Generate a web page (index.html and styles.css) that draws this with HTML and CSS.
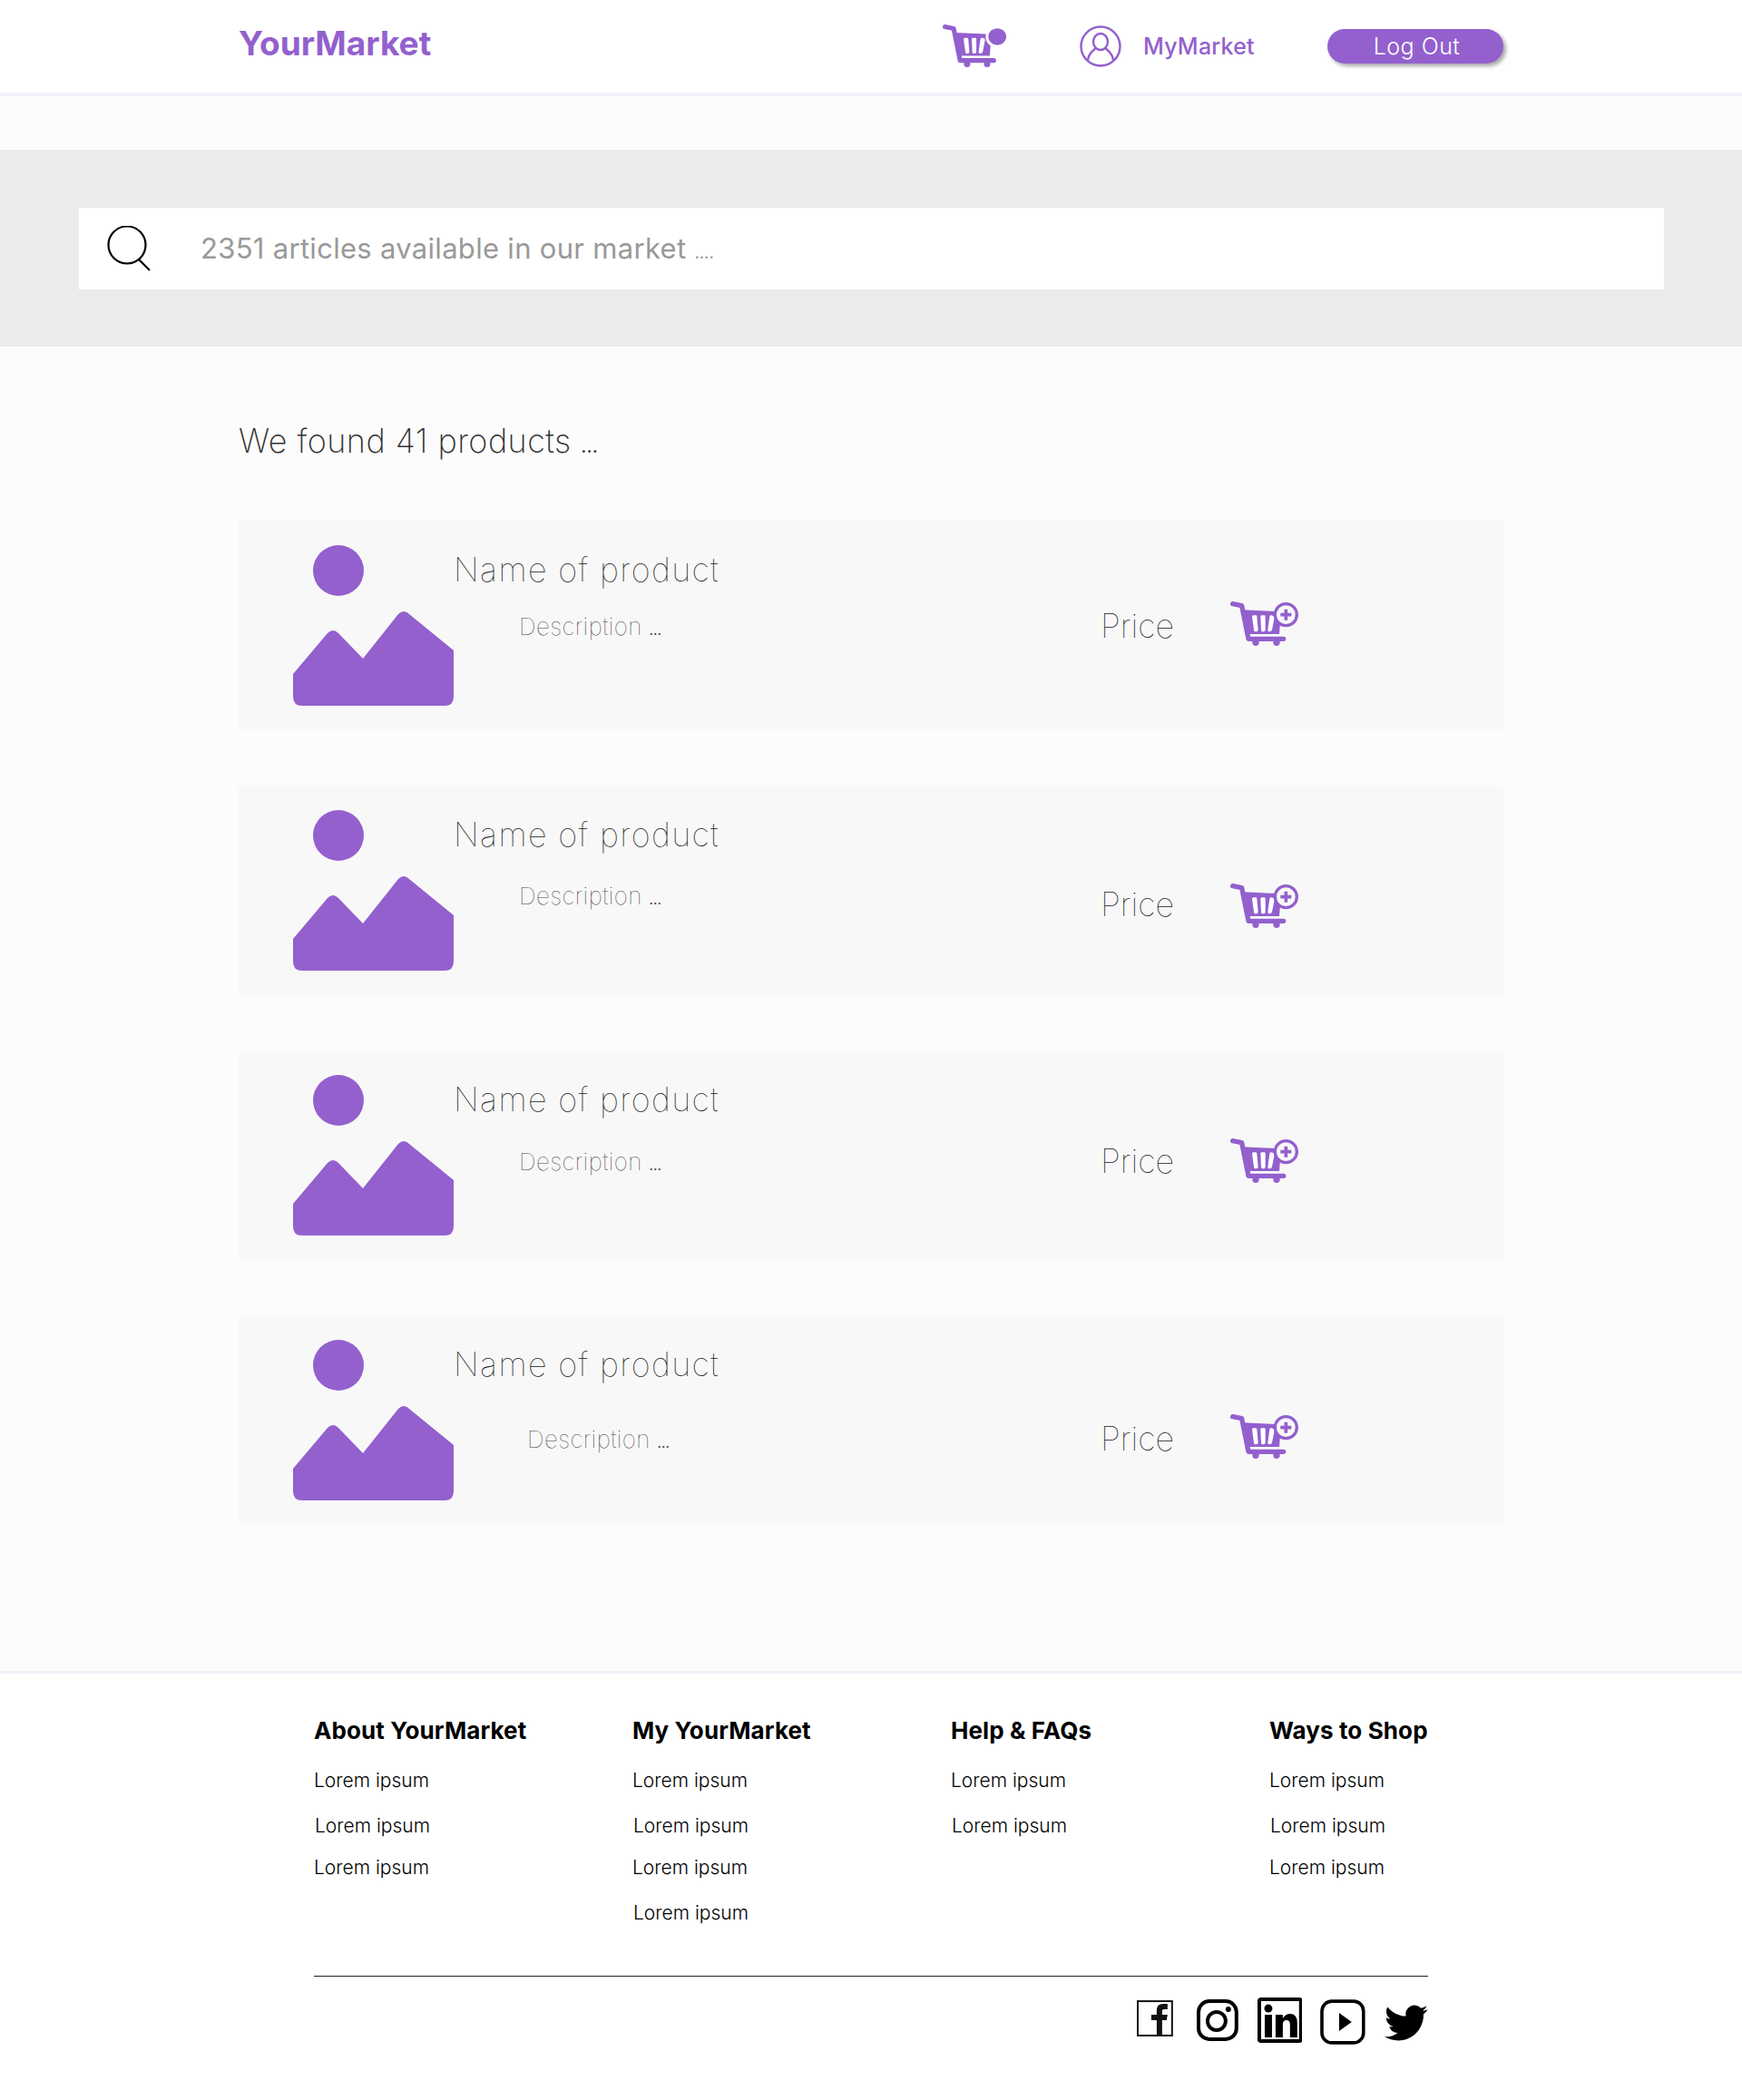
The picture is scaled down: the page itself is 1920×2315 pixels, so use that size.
FILE: index.html
```html
<!DOCTYPE html>
<html lang="en">
<head>
  <meta charset="UTF-8">
  <title>YourMarket</title>
  <link rel="stylesheet" href="styles.css">
</head>
<body>

  <svg class="defs" width="0" height="0">
    <defs>
      <symbol id="cartBody" viewBox="0 0 225 147">
        <path d="M8 8 L38 14 L60 124 H176" fill="none" stroke="#9360ce" stroke-width="16" stroke-linecap="round" stroke-linejoin="round"/>
        <path d="M42 28 L168 34 L162 108 H58 Z" fill="#9360ce"/>
        <path d="M72 50 Q72 46 78 46 L84 46 Q88 46 88 50 L92 94 Q92 100 86 100 L82 100 Q78 100 78 94 Z M100 48 Q100 46 106 46 L112 46 Q116 46 116 50 L116 94 Q116 100 110 100 L106 100 Q102 100 102 94 Z M130 50 Q130 46 136 46 L142 48 Q146 50 146 54 L138 94 Q136 100 130 100 L128 100 Q124 100 124 94 Z" fill="#fff"/>
        <circle cx="84" cy="136" r="11" fill="#9360ce"/>
        <circle cx="153" cy="136" r="11" fill="#9360ce"/>
      </symbol>
      <symbol id="productImg" viewBox="0 0 177 177">
        <circle cx="50" cy="28" r="28" fill="#9360ce"/>
        <path d="M0 142 L38 97 Q44 91 50 97 L77 125 L116 76 Q122 70 128 76 L177 116 V167 Q177 177 167 177 H10 Q0 177 0 167 Z" fill="#9360ce"/>
      </symbol>
    </defs>
  </svg>

  <header class="topbar">
    <div class="logo">YourMarket</div>
    <svg class="cart-top" viewBox="0 0 225 147">
      <use href="#cartBody"/>
      <ellipse cx="188" cy="42" rx="40" ry="38" fill="#fff"/>
      <ellipse cx="188" cy="42" rx="31" ry="29" fill="#9360ce"/>
    </svg>
    <svg class="profile" viewBox="0 0 46 46" fill="none" stroke="#9360ce" stroke-width="2.4">
      <circle cx="23" cy="23" r="21.5"/>
      <ellipse cx="23" cy="18" rx="8" ry="9"/>
      <path d="M9 38 C10 30 16 27 18 25 M37 38 C36 30 30 27 28 25"/>
    </svg>
    <a class="mymarket">MyMarket</a>
    <button class="logout">Log Out</button>
  </header>

  <section class="searchBand">
    <div class="searchBox">
      <svg class="searchIcon" viewBox="0 0 50 50" fill="none" stroke="#000" stroke-width="2.2">
        <ellipse cx="22" cy="21" rx="20.5" ry="20.5"/>
        <path d="M35 37 L47 49"/>
      </svg>
      <span class="searchText">2351 articles available in our market <span class="dots">....</span></span>
    </div>
  </section>

  <main class="results">
    <h2 class="found">We found 41 products <span class="dots">...</span></h2>

    <div class="card">
      <svg class="thumb"><use href="#productImg"/></svg>
      <div class="info">
        <div class="name">Name of product</div>
        <div class="desc">Description <span class="dots">...</span></div>
      </div>
      <div class="price">Price</div>
      <svg class="addCart" viewBox="0 0 225 147">
        <use href="#cartBody"/>
        <circle cx="184" cy="44" r="36" fill="#f8f8f8" stroke="#9360ce" stroke-width="10"/>
        <path d="M184 26 V62 M166 44 H202" stroke="#9360ce" stroke-width="11"/>
      </svg>
    </div>

    <div class="card card-b">
      <svg class="thumb"><use href="#productImg"/></svg>
      <div class="info">
        <div class="name">Name of product</div>
        <div class="desc">Description <span class="dots">...</span></div>
      </div>
      <div class="price">Price</div>
      <svg class="addCart" viewBox="0 0 225 147">
        <use href="#cartBody"/>
        <circle cx="184" cy="44" r="36" fill="#f8f8f8" stroke="#9360ce" stroke-width="10"/>
        <path d="M184 26 V62 M166 44 H202" stroke="#9360ce" stroke-width="11"/>
      </svg>
    </div>

    <div class="card card-c">
      <svg class="thumb"><use href="#productImg"/></svg>
      <div class="info">
        <div class="name">Name of product</div>
        <div class="desc">Description <span class="dots">...</span></div>
      </div>
      <div class="price">Price</div>
      <svg class="addCart" viewBox="0 0 225 147">
        <use href="#cartBody"/>
        <circle cx="184" cy="44" r="36" fill="#f8f8f8" stroke="#9360ce" stroke-width="10"/>
        <path d="M184 26 V62 M166 44 H202" stroke="#9360ce" stroke-width="11"/>
      </svg>
    </div>

    <div class="card card-d">
      <svg class="thumb"><use href="#productImg"/></svg>
      <div class="info">
        <div class="name">Name of product</div>
        <div class="desc">Description <span class="dots">...</span></div>
      </div>
      <div class="price">Price</div>
      <svg class="addCart" viewBox="0 0 225 147">
        <use href="#cartBody"/>
        <circle cx="184" cy="44" r="36" fill="#f8f8f8" stroke="#9360ce" stroke-width="10"/>
        <path d="M184 26 V62 M166 44 H202" stroke="#9360ce" stroke-width="11"/>
      </svg>
    </div>
  </main>

  <footer class="footer">
    <div class="columns">
      <div class="col">
        <h3>About YourMarket</h3>
        <ul>
          <li>Lorem ipsum</li>
          <li>Lorem ipsum</li>
          <li>Lorem ipsum</li>
        </ul>
      </div>
      <div class="col">
        <h3>My YourMarket</h3>
        <ul>
          <li>Lorem ipsum</li>
          <li>Lorem ipsum</li>
          <li>Lorem ipsum</li>
          <li>Lorem ipsum</li>
        </ul>
      </div>
      <div class="col">
        <h3>Help &amp; FAQs</h3>
        <ul>
          <li>Lorem ipsum</li>
          <li>Lorem ipsum</li>
        </ul>
      </div>
      <div class="col">
        <h3>Ways to Shop</h3>
        <ul>
          <li>Lorem ipsum</li>
          <li>Lorem ipsum</li>
          <li>Lorem ipsum</li>
        </ul>
      </div>
    </div>

    <div class="social">
      <svg class="fb" viewBox="0 0 40 40">
        <rect x="1" y="1" width="38" height="38" fill="none" stroke="#111" stroke-width="2"/>
        <path d="M22 39 V22 H16 V16 H22 V11 Q22 4 29 4 H34 V10 H30 Q28 10 28 12 V16 H34 L33 22 H28 V39 Z" fill="#111"/>
      </svg>
      <svg class="ig" viewBox="0 0 46 46" fill="none" stroke="#000" stroke-width="4">
        <rect x="2" y="2" width="42" height="42" rx="12"/>
        <circle cx="22" cy="24" r="10"/>
        <circle cx="35" cy="11" r="3" fill="#000" stroke="none"/>
      </svg>
      <svg class="in" viewBox="0 0 50 50">
        <rect x="2" y="2" width="46" height="46" rx="2" fill="none" stroke="#000" stroke-width="4"/>
        <circle cx="12" cy="12" r="4.5" fill="#000"/>
        <path d="M8 19 H16 V44 H8 Z M20 19 H28 V23 Q31 18 36 18 Q44 18 44 28 V44 H36 V30 Q36 25 32 25 Q28 25 28 30 V44 H20 Z" fill="#000"/>
      </svg>
      <svg class="yt" viewBox="0 0 50 50">
        <rect x="2" y="2" width="46" height="46" rx="11" fill="none" stroke="#000" stroke-width="3.6"/>
        <path d="M21 15 L35 25 L21 35 Z" fill="#000"/>
      </svg>
      <svg class="tw" viewBox="0 0 24 24">
        <path d="M23.953 4.57a10 10 0 01-2.825.775 4.958 4.958 0 002.163-2.723c-.951.555-2.005.959-3.127 1.184a4.92 4.92 0 00-8.384 4.482C7.69 8.095 4.067 6.13 1.64 3.162a4.822 4.822 0 00-.666 2.475c0 1.71.87 3.213 2.188 4.096a4.904 4.904 0 01-2.228-.616v.06a4.923 4.923 0 003.946 4.827 4.996 4.996 0 01-2.212.085 4.936 4.936 0 004.604 3.417 9.867 9.867 0 01-6.102 2.105c-.39 0-.779-.023-1.17-.067a13.995 13.995 0 007.557 2.209c9.053 0 13.998-7.496 13.998-13.985 0-.21 0-.42-.015-.63A9.935 9.935 0 0024 4.59z" fill="#000"/>
      </svg>
    </div>
  </footer>

</body>
</html>
```

FILE: styles.css
```css
html, body {
  margin: 0;
  padding: 0;
}

body {
  background-color: #fcfcfc;
  font-family: 'Inter', 'Lato', sans-serif;
  color: #000;
}

.defs {
  position: absolute;
}

.dots {
  font-size: 0.6em;
  line-height: 0;
  font-weight: 400;
  letter-spacing: 0;
}

.topbar {
  display: flex;
  align-items: flex-start;
  height: 102px;
  padding: 0 263px;
  background-color: #fff;
  border-bottom: 4px solid #f1f1fb;
}

.logo {
  margin-top: 27px;
  margin-right: auto;
  font-size: 37px;
  line-height: 42px;
  font-weight: 700;
  color: #9360ce;
}

.cart-top {
  width: 72px;
  height: 49px;
  margin-top: 26px;
}

.profile {
  width: 46px;
  height: 46px;
  margin-top: 28px;
  margin-left: 79px;
}

.mymarket {
  margin-top: 36px;
  margin-left: 24px;
  width: 123px;
  font-size: 25px;
  line-height: 30px;
  font-weight: 500;
  letter-spacing: 0.2px;
  color: #9360ce;
  white-space: nowrap;
}

.logout {
  width: 194px;
  height: 38px;
  margin-top: 32px;
  margin-left: 80px;
  padding: 0 0 0 3px;
  background-color: #9360ce;
  color: #fff;
  border: none;
  border-radius: 19px;
  box-shadow: 3px 3px 4px rgba(0, 0, 0, 0.35);
  font-family: inherit;
  font-size: 25px;
  font-weight: 300;
  letter-spacing: 0.5px;
}

.searchBand {
  margin-top: 59px;
  padding: 64px 86px 63px 87px;
  background-color: #ebebeb;
}

.searchBox {
  display: flex;
  align-items: center;
  height: 90px;
  padding-left: 31px;
  background-color: #fff;
}

.searchIcon {
  width: 50px;
  height: 50px;
}

.searchText {
  margin-left: 53px;
  margin-top: -2px;
  font-size: 31px;
  font-weight: 400;
  letter-spacing: 0.3px;
  color: #999;
  white-space: nowrap;
}

.results {
  padding: 0 263px;
  height: 1378px;
}

.found {
  margin: 82px 0 66px;
  font-size: 36px;
  line-height: 44px;
  font-weight: 200;
  letter-spacing: 0.45px;
  color: #333;
}

.card {
  display: flex;
  align-items: flex-start;
  height: 230px;
  margin-bottom: 62px;
  padding-left: 60px;
  background-color: #f8f8f8;
}

.thumb {
  flex: none;
  width: 177px;
  height: 177px;
  margin-top: 27px;
}

.info {
  width: 713px;
}

.name {
  margin-top: 32px;
  font-size: 36px;
  line-height: 44px;
  font-weight: 100;
  letter-spacing: 1.35px;
  color: #222;
  white-space: nowrap;
}

.desc {
  margin-top: 25px;
  margin-left: 72px;
  font-size: 26px;
  line-height: 32px;
  font-weight: 100;
  letter-spacing: 0.4px;
  color: #444;
}

.price {
  width: 143px;
  margin-top: 94px;
  font-size: 36px;
  line-height: 44px;
  font-weight: 100;
  color: #222;
}

.addCart {
  flex: none;
  width: 75px;
  height: 49px;
  margin-top: 89px;
}

.card-b .desc { margin-top: 30px; }
.card-b .price { margin-top: 109px; }
.card-b .addCart { margin-top: 108px; }

.card-c .desc { margin-top: 31px; }
.card-c .price { margin-top: 100px; }
.card-c .addCart { margin-top: 97px; }

.card-d .desc { margin-top: 45px; margin-left: 81px; }
.card-d .price { margin-top: 114px; }
.card-d .addCart { margin-top: 109px; }

.footer {
  height: 470px;
  padding: 0 346px;
  background-color: #fff;
  border-top: 3px solid #f1f1fb;
}

.columns {
  display: flex;
  height: 334px;
  padding-top: 47px;
  box-sizing: border-box;
  border-bottom: 1px solid #222;
}

.col {
  flex: none;
  width: 351px;
}

.col:last-child {
  width: 175px;
}

.col h3 {
  margin: 0;
  font-size: 26px;
  line-height: 32px;
  font-weight: 700;
  letter-spacing: 0.1px;
  white-space: nowrap;
}

.col ul {
  list-style: none;
  margin: 0;
  padding: 0;
}

.col li {
  font-size: 21px;
  line-height: 26px;
  font-weight: 300;
  margin-top: 24px;
}

.col li:first-child {
  margin-top: 26px;
}

.col li:nth-child(even) {
  margin-left: 1px;
}

.col li:nth-child(3) {
  margin-top: 20px;
}

.social {
  display: flex;
  align-items: flex-start;
  padding-top: 23px;
  padding-left: 907px;
}

.fb { width: 40px; height: 40px; margin-top: 3px; }
.ig { width: 46px; height: 46px; margin-top: 2px; margin-left: 26px; }
.in { width: 50px; height: 50px; margin-left: 21px; }
.yt { width: 50px; height: 50px; margin-top: 2px; margin-left: 20px; }
.tw { width: 48px; height: 48px; margin-top: 4px; margin-left: 21px; }
```
